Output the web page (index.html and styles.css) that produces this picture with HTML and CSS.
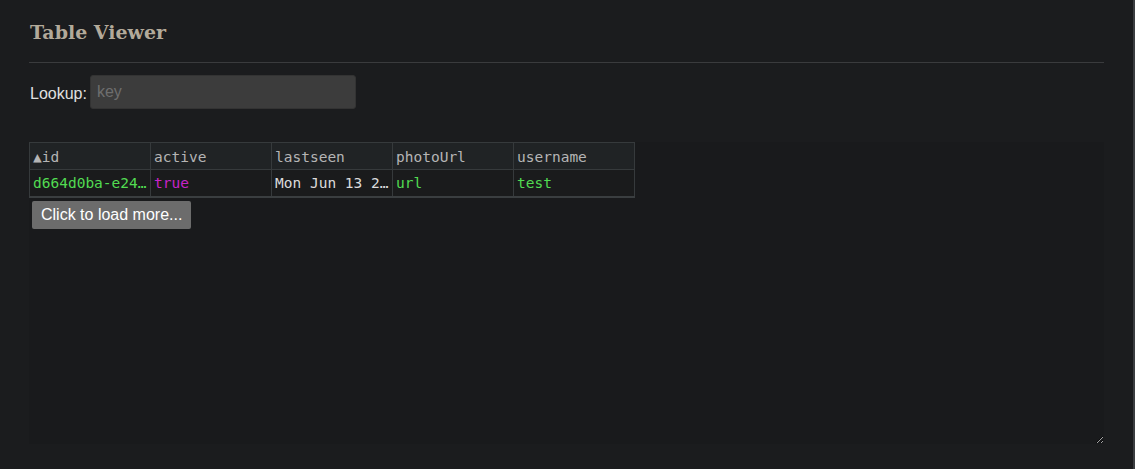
FILE: index.html
```html
<!DOCTYPE html>
<html>
<head>
<meta charset="utf-8">
<link rel="stylesheet" href="styles.css">
</head>
<body>
<div class="page">
  <h1 class="title">Table Viewer</h1>
  <hr class="rule">
  <div class="lookup">
    <label class="lookup-label">Lookup:</label>
    <input class="lookup-input" type="text" placeholder="key">
  </div>
  <div class="viewer">
    <table class="grid">
      <thead>
        <tr>
          <th>▲id</th>
          <th>active</th>
          <th>lastseen</th>
          <th>photoUrl</th>
          <th>username</th>
        </tr>
      </thead>
      <tbody>
        <tr>
          <td class="str">d664d0ba-e24…</td>
          <td class="bool">true</td>
          <td class="date">Mon Jun 13 2…</td>
          <td class="str">url</td>
          <td class="str">test</td>
        </tr>
      </tbody>
    </table>
    <button class="more">Click to load more...</button>
  </div>
</div>
</body>
</html>
```
FILE: styles.css
```css
html, body {
  margin: 0;
  padding: 0;
  background: #1b1c1e;
  height: 100%;
}
body {
  border-right: 2px solid #3b3d40;
  box-sizing: border-box;
  font-family: "Liberation Sans", Arial, sans-serif;
  color: #dddddd;
}
.page {
  padding: 18px 29px 0 29px;
}
.title {
  margin: 0;
  font-family: "DejaVu Serif", serif;
  font-weight: bold;
  font-size: 19px;
  line-height: 28px;
  color: #b3aa9a;
  padding-left: 1px;
}
.rule {
  margin: 16px 0 0 0;
  border: 0;
  border-top: 1px solid #3a3b3d;
  height: 0;
}
.lookup {
  display: flex;
  align-items: center;
  margin-top: 12px;
  gap: 3px;
}
.lookup-label {
  font-size: 16px;
  color: #e0e0e0;
  padding-left: 1px;
  margin-top: 4px;
}
.lookup-input {
  width: 266px;
  height: 34px;
  box-sizing: border-box;
  background: #3c3c3c;
  border: 1px solid #333;
  border-radius: 3px;
  padding: 0 6px;
  font-family: "Liberation Sans", Arial, sans-serif;
  font-size: 16px;
  color: #ddd;
  outline: none;
}
.lookup-input::placeholder {
  color: #6e6e6e;
}
.viewer {
  margin-top: 33px;
  background: #191a1c;
  height: 302px;
  overflow: auto;
  resize: both;
}
.grid {
  border-collapse: collapse;
  table-layout: fixed;
  width: 606px;
  font-family: "DejaVu Sans Mono", monospace;
  font-size: 14.5px;
  border-bottom: 2px solid #3a3e40;
}
.grid th, .grid td {
  border: 1px solid #363a3c;
  width: 121px;
  height: 27px;
  padding: 1px 3px 0 3px;
  text-align: left;
  white-space: nowrap;
  overflow: hidden;
  text-overflow: ellipsis;
  box-sizing: border-box;
}
.grid th {
  font-weight: normal;
  background: #202325;
  color: #b5b5b5;
}
.grid td {
  background: #1a1b1c;
}
.str { color: #52dc52; }
.bool { color: #c823c8; }
.date { color: #dcdcdc; }
.more {
  margin: 3px 0 0 3px;
  background: #6c6c6c;
  color: #ffffff;
  border: 0;
  border-radius: 2px;
  height: 28px;
  padding: 0 9px;
  font-family: "Liberation Sans", Arial, sans-serif;
  font-size: 16px;
}
```
